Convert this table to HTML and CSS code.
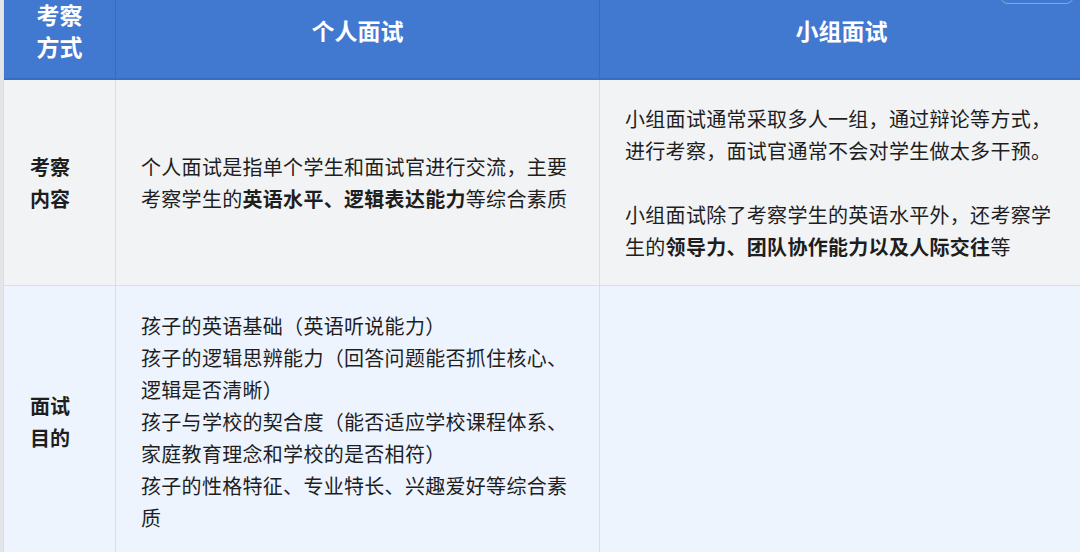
FILE: index.html
```html
<!DOCTYPE html>
<html lang="zh-CN">
<head>
<meta charset="utf-8">
<title>面试方式对比</title>
<link rel="stylesheet" href="styles.css">
</head>
<body>
<div class="page">
  <div class="corner-tab"></div>
  <div class="grid">
    <div class="cell head label-head"><span>考察<br>方式</span></div>
    <div class="cell head">个人面试</div>
    <div class="cell head last">小组面试</div>

    <div class="cell label row1">考察<br>内容</div>
    <div class="cell body row1">
      <p>个人面试是指单个学生和面试官进行交流，主要考察学生的<b>英语水平、逻辑表达能力</b>等综合素质</p>
    </div>
    <div class="cell body row1 last">
      <p>小组面试通常采取多人一组，通过辩论等方式，进行考察，面试官通常不会对学生做太多干预。</p>
      <p class="gap">小组面试除了考察学生的英语水平外，还考察学生的<b>领导力、团队协作能力以及人际交往</b>等</p>
    </div>

    <div class="cell label row2">面试<br>目的</div>
    <div class="cell body row2">
      <p>孩子的英语基础（英语听说能力）</p>
      <p>孩子的逻辑思辨能力（回答问题能否抓住核心、逻辑是否清晰）</p>
      <p>孩子与学校的契合度（能否适应学校课程体系、家庭教育理念和学校的是否相符）</p>
      <p>孩子的性格特征、专业特长、兴趣爱好等综合素质</p>
    </div>
    <div class="cell body row2 last"></div>
  </div>
</div>
</body>
</html>
```
FILE: styles.css
```css
html, body {
  margin: 0;
  padding: 0;
  background: #e4e5e8;
  overflow: hidden;
}

.page {
  position: relative;
  width: 1080px;
  height: 552px;
  overflow: hidden;
  padding-left: 3px;
  box-sizing: border-box;
  font-family: "Noto Sans CJK SC", "Noto Sans", sans-serif;
  color: #1e1e1e;
}

.corner-tab {
  position: absolute;
  top: -20px;
  left: 1000px;
  width: 72px;
  height: 22px;
  border: 1px solid rgba(255, 255, 255, 0.35);
  border-radius: 8px;
  z-index: 2;
}

.grid {
  display: grid;
  grid-template-columns: 112px 484px 484px;
  width: 1081px;
  border-left: 1px solid #d3dff2;
}

.cell {
  display: flex;
  flex-direction: column;
  justify-content: center;
  box-sizing: border-box;
  border-right: 1px solid #d3dff2;
  border-bottom: 1px solid #d3dff2;
}

.head {
  height: 80px;
  padding-bottom: 18px;
  background: #4179d1;
  color: #ffffff;
  font-size: 23px;
  font-weight: 700;
  align-items: center;
  border-right-color: #386bc0;
  border-bottom: 2px solid #3a6cc2;
  line-height: 32px;
}

.label-head span {
  text-align: center;
}

.label {
  font-size: 20px;
  font-weight: 700;
  line-height: 32px;
  padding-left: 26px;
}

.body {
  font-size: 20px;
  line-height: 32px;
  letter-spacing: 0.3px;
  padding: 0 25px;
}

.body p {
  margin: 0;
}

.body p.gap {
  margin-top: 32px;
}

.body b {
  font-weight: 700;
}

.row1 {
  background: #f2f3f5;
  padding-top: 23px;
  padding-bottom: 22px;
}

.row2 {
  background: #edf4fe;
  padding-top: 24px;
  padding-bottom: 24px;
}

.label.row1,
.label.row2 {
  padding-top: 0;
  padding-bottom: 0;
}
```
